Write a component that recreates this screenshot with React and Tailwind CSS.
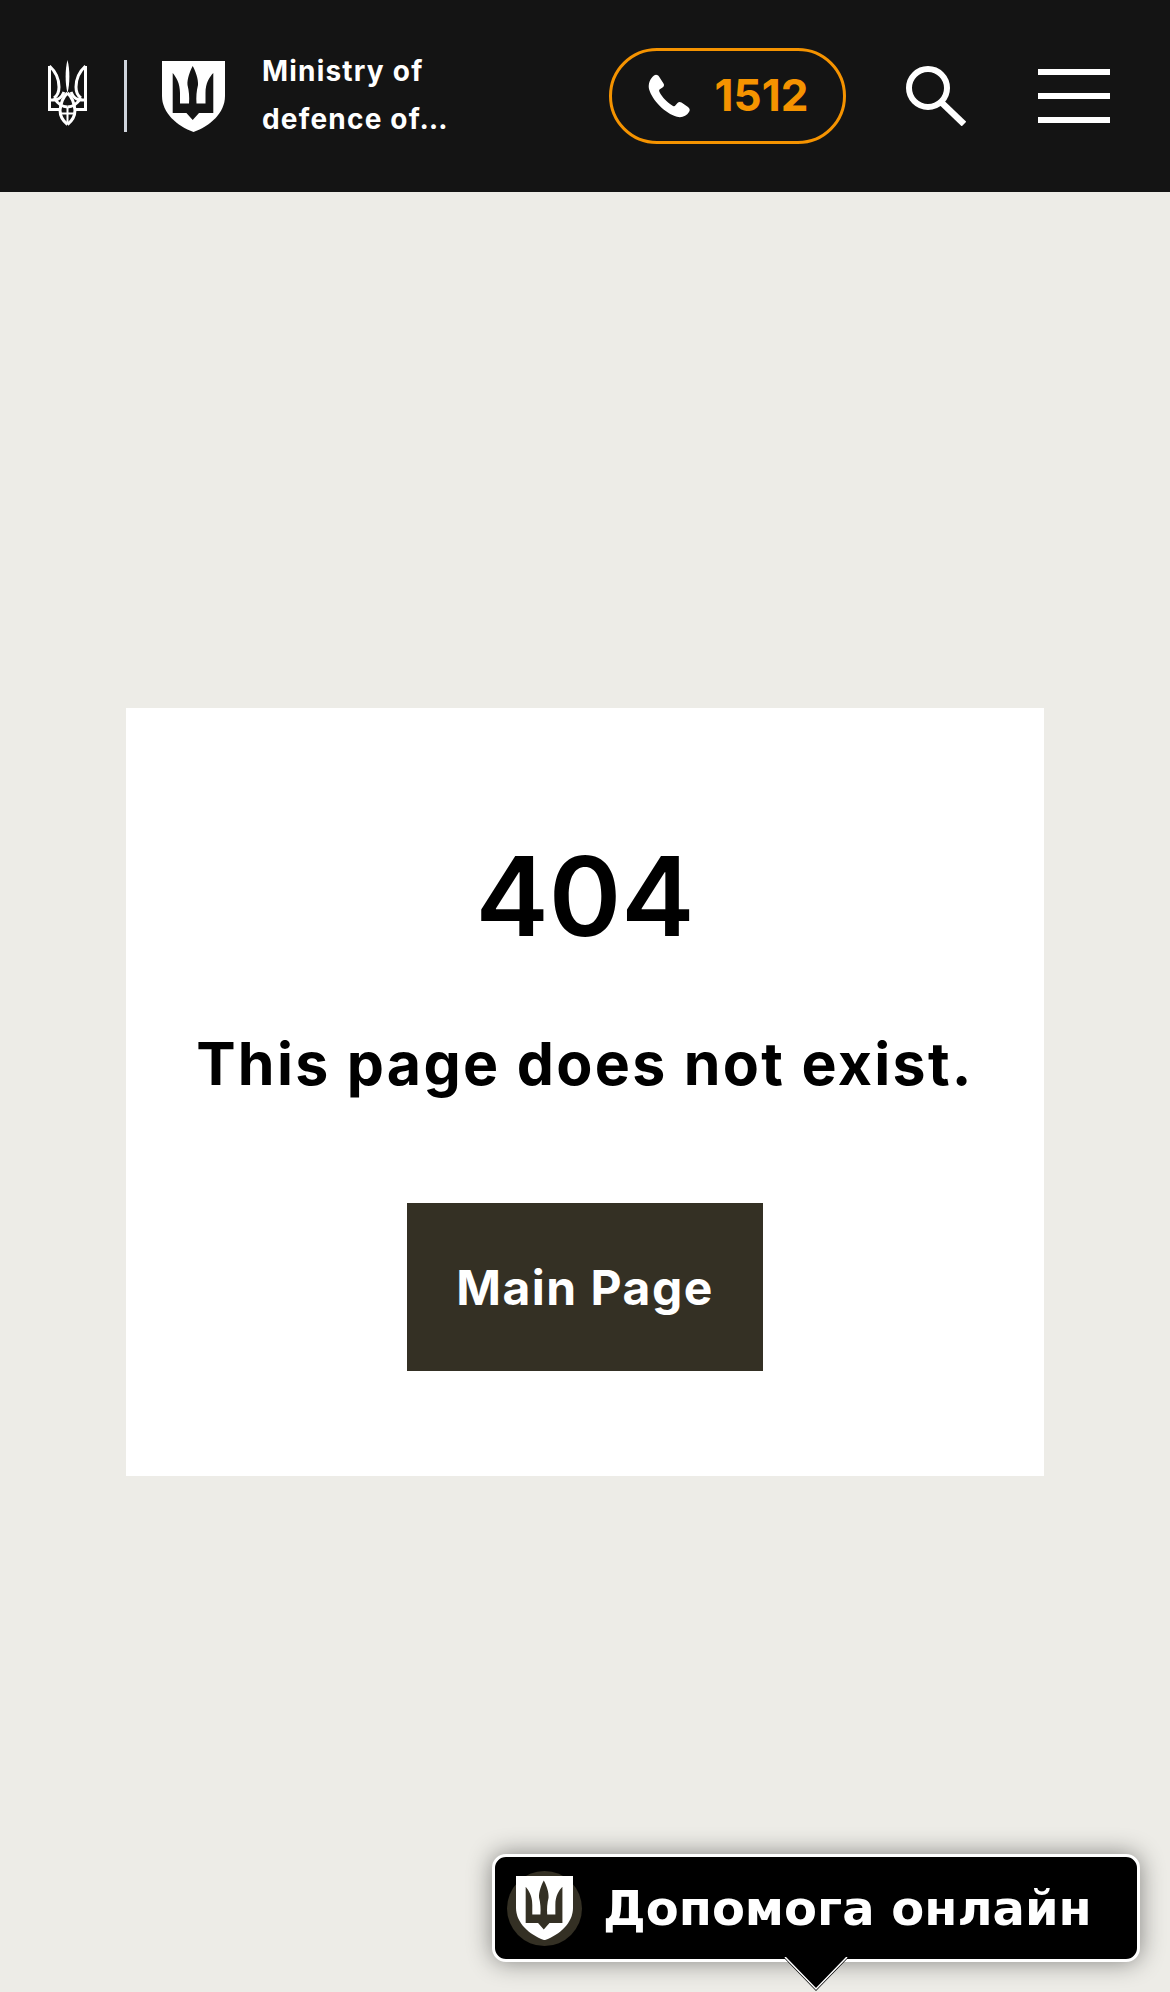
import React from 'react';

const Trident = () => {
  const side = (
    <g fill="none" stroke="#fff" strokeWidth="3">
      <path d="M1.5 6V49.5H13" />
      <path d="M1.5 6C7 11 11 18 11 27C11 33 9 36 6 38" />
      <path d="M1.5 40H6C10 40 14 37 16 32" />
      <path d="M6 38C10 44 14 47 19.5 47" />
      <path d="M19.5 33C16 36 13 42 12 50C12 57 15 61 19.5 64.5" />
    </g>
  );
  return (
    <svg width="39" height="66" viewBox="0 0 39 66" className="shrink-0 -mt-[6px]">
      {side}
      <g transform="translate(39 0) scale(-1 1)">{side}</g>
      <path d="M19.5 0C17 9 17 24 19.5 33C22 24 22 9 19.5 0Z" fill="#fff" />
      <path d="M19.5 47V63M13 53.5H26" stroke="#fff" strokeWidth="2" fill="none" />
    </svg>
  );
};

const Shield = ({ size = 63, dark = '#141414' }) => (
  <svg width={size} height={(size * 71) / 63} viewBox="0 0 63 71" className="shrink-0">
    <path d="M0 0H63V35C63 52 48 65 31.5 71C15 65 0 52 0 35Z" fill="#fff" />
    <path
      d="M10.7 12C14 16 18 22 18 32V42.5H27C27.5 36 27 30 25.5 24C25 18 28 10 30.7 5C33.5 10 36.5 18 36 24C34.5 30 34 36 34.5 42.5H43.5V32C43.5 22 47.5 16 51.3 12V52H37L30.7 59L24.4 52H10.7Z"
      fill={dark}
    />
  </svg>
);

const Header = () => (
  <header className="h-[192px] bg-[#141414] flex items-center pl-[48px] pr-[60px] font-['Inter',sans-serif]">
    <Trident />
    <div className="w-[3px] h-[72px] bg-[#d0d5dd] ml-[37px] mr-[35px]" />
    <Shield />
    <div className="ml-[37px] -mt-[3px] w-[190px] text-white text-[28px] leading-[48px] font-bold tracking-[1.2px] whitespace-nowrap">
      <div>Ministry of</div>
      <div>defence of…</div>
    </div>
    <a className="ml-auto w-[237px] h-[96px] border-[3px] border-[#f59300] rounded-[48px] flex items-center justify-center gap-[24px]">
      <svg width="44" height="44" viewBox="0 0 44 44">
        <path
          d="M7 1.5C9 0 11 1 12 2.5L16.5 9.5C17.5 11 17 12.5 15.5 13.5L12.5 15.5C12 16 12 17 12.5 18C15 23 20 28.5 26 32C27 32.5 27.8 32.3 28.3 31.6L30.5 29C31.5 28 33 27.6 34.5 28.6L41 33C43 34.5 43.2 36.5 42 38C39.5 42 35 44 30 42.8C18 39.5 5 26 2 15C1 10 3 4.5 7 1.5Z"
          fill="#fff"
        />
      </svg>
      <span className="text-[#f59300] text-[44px] font-bold leading-none -mt-[2px]">1512</span>
    </a>
    <svg width="60" height="60" viewBox="0 0 60 60" className="ml-[60px] shrink-0">
      <circle cx="22" cy="22" r="19" fill="none" stroke="#fff" strokeWidth="6" />
      <path d="M35 36L58 58" stroke="#fff" strokeWidth="6.5" fill="none" />
    </svg>
    <button className="ml-[72px] w-[72px] flex flex-col gap-[18px]">
      <span className="block h-[6px] bg-white" />
      <span className="block h-[6px] bg-white" />
      <span className="block h-[6px] bg-white" />
    </button>
  </header>
);

const HelpWidget = () => (
  <div className="fixed left-[492px] top-[1854px] w-[648px] h-[108px] bg-black border-[3px] border-white rounded-[14px] shadow-[0_0_24px_rgba(0,0,0,0.45)] flex items-center pl-[12px]">
    <div className="w-[75px] h-[75px] rounded-full bg-[#343024] flex items-center justify-center shrink-0">
      <Shield size={57} dark="#343024" />
    </div>
    <span className="ml-[21px] text-white text-[48px] font-bold font-['DejaVu_Sans',sans-serif] whitespace-nowrap">
      Допомога онлайн
    </span>
    <svg width="66" height="35" viewBox="0 0 66 35" className="absolute left-[288px] top-[100px]">
      <path d="M0 0H66L33 34Z" fill="#000" />
      <path d="M2 0L33 32L64 0" fill="none" stroke="#fff" strokeWidth="1.5" />
    </svg>
  </div>
);

export default function App() {
  return (
    <div className="min-h-[1992px] bg-[#edece7] flex flex-col font-['Inter',sans-serif]">
      <Header />
      <main className="flex-1 flex items-center justify-center">
        <div className="w-[918px] h-[768px] bg-white flex flex-col items-center pt-[133px]">
          <h1 className="text-[110px] leading-none font-semibold text-black">404</h1>
          <p className="mt-[78px] text-[59px] leading-[70px] font-bold tracking-[2.3px] text-black whitespace-nowrap">
            This page does not exist.
          </p>
          <a className="mt-[104px] w-[356px] h-[168px] bg-[#343024] text-white text-[48px] font-bold tracking-[1.5px] flex items-center justify-center pt-[2px]">
            Main Page
          </a>
        </div>
      </main>
      <HelpWidget />
    </div>
  );
}
